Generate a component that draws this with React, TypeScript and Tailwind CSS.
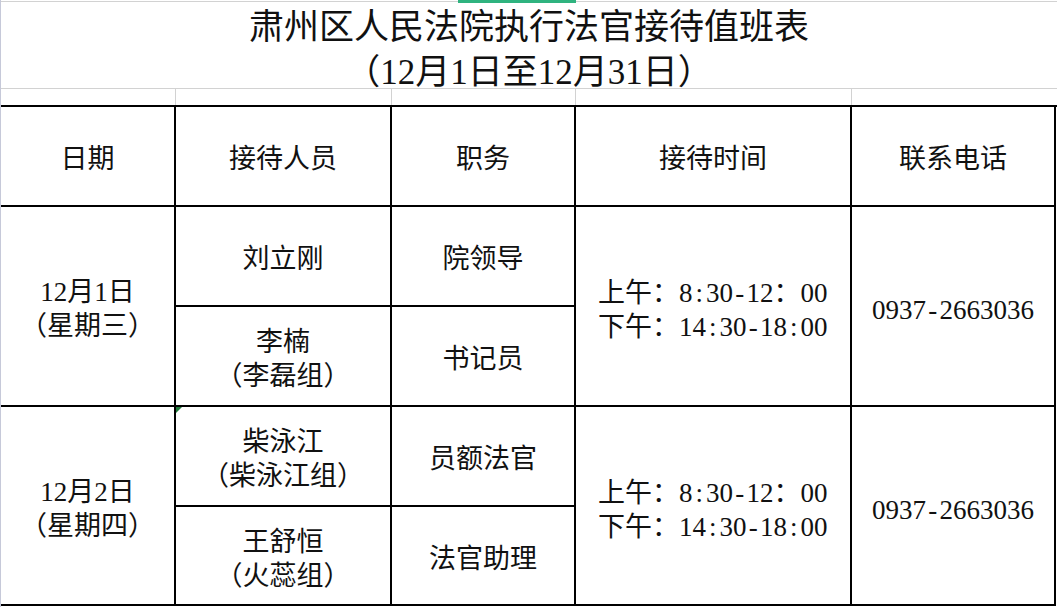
import React from 'react';

type Person = { name: string[]; role: string };
type Day = { date: string; week: string; people: Person[] };

const days: Day[] = [
  {
    date: '12月1日',
    week: '（星期三）',
    people: [
      { name: ['刘立刚'], role: '院领导' },
      { name: ['李楠', '（李磊组）'], role: '书记员' },
    ],
  },
  {
    date: '12月2日',
    week: '（星期四）',
    people: [
      { name: ['柴泳江', '（柴泳江组）'], role: '员额法官' },
      { name: ['王舒恒', '（火蕊组）'], role: '法官助理' },
    ],
  },
];

const headers = ['日期', '接待人员', '职务', '接待时间', '联系电话'];

// SimSun-like half-width punctuation: ':' and '-' take half an em
const Half = ({ text }: { text: string }) => (
  <>
    {text.split('').map((ch, i) =>
      ch === ':' || ch === '-' ? (
        <span key={i} className="inline-block w-[0.5em] text-center">
          {ch}
        </span>
      ) : (
        <React.Fragment key={i}>{ch}</React.Fragment>
      )
    )}
  </>
);

const cell = 'border-r-2 border-b-2 border-black flex flex-col items-center justify-center text-center';

export default function App() {
  return (
    <div className="w-[1057px] h-[607px] bg-white overflow-hidden relative border-l border-[#c6c9d9] text-[#111] font-['Liberation_Serif','Noto_Sans_CJK_SC',serif]">
      {/* selected cell marker */}
      <div className="absolute top-0 left-[457px] w-[118px] h-[3px] bg-[#2fb37f]" />

      <div className="h-[1px]" />

      {/* title */}
      <div className="h-[88px] border-t border-b border-[#d2d2d2] flex flex-col items-center justify-center pt-[10px] text-[35px] leading-[45px]">
        <div>肃州区人民法院执行法官接待值班表</div>
        <div>（12月1日至12月31日）</div>
      </div>

      {/* empty spreadsheet row */}
      <div className="h-[16px] flex">
        <div className="w-[175px] border-r border-[#d2d2d2]" />
        <div className="w-[216px] border-r border-[#d2d2d2]" />
        <div className="w-[184px] border-r border-[#d2d2d2]" />
        <div className="w-[276px] border-r border-[#d2d2d2]" />
        <div className="flex-1" />
      </div>

      {/* table */}
      <div className="grid grid-cols-[175px_216px_184px_276px_204px] grid-rows-[100px_100px_100px_100px_99px] border-t-2 border-black text-[27px] leading-[34px]">
        {headers.map((h) => (
          <div key={h} className={`${cell} pt-[6px]`}>
            {h}
          </div>
        ))}

        {days.map((d, di) => (
          <React.Fragment key={d.date}>
            <div className={`${cell} row-span-2 col-start-1 pt-[6px]`} style={{ gridRowStart: di * 2 + 2 }}>
              <div>{d.date}</div>
              <div>{d.week}</div>
            </div>
            {d.people.map((p, pi) => (
              <React.Fragment key={p.role}>
                <div
                  className={`${cell} col-start-2 relative pt-[6px]`}
                  style={{ gridRowStart: di * 2 + 2 + pi }}
                >
                  {di === 1 && pi === 0 && (
                    <div className="absolute left-0 top-0 w-0 h-0 border-t-[6px] border-t-[#1f7a3a] border-r-[6px] border-r-transparent" />
                  )}
                  {p.name.map((n) => (
                    <div key={n}>{n}</div>
                  ))}
                </div>
                <div className={`${cell} col-start-3 pt-[6px]`} style={{ gridRowStart: di * 2 + 2 + pi }}>
                  {p.role}
                </div>
              </React.Fragment>
            ))}
            <div className={`${cell} row-span-2 col-start-4 !items-start pl-[22px] pt-[8px]`} style={{ gridRowStart: di * 2 + 2 }}>
              <div className="text-left">
                上午：<Half text="8:30-12" />：00
              </div>
              <div className="text-left">
                下午：<Half text="14:30-18:00" />
              </div>
            </div>
            <div className={`${cell} row-span-2 col-start-5 pt-[8px]`} style={{ gridRowStart: di * 2 + 2 }}>
              <div>
                <Half text="0937-2663036" />
              </div>
            </div>
          </React.Fragment>
        ))}
      </div>
    </div>
  );
}
